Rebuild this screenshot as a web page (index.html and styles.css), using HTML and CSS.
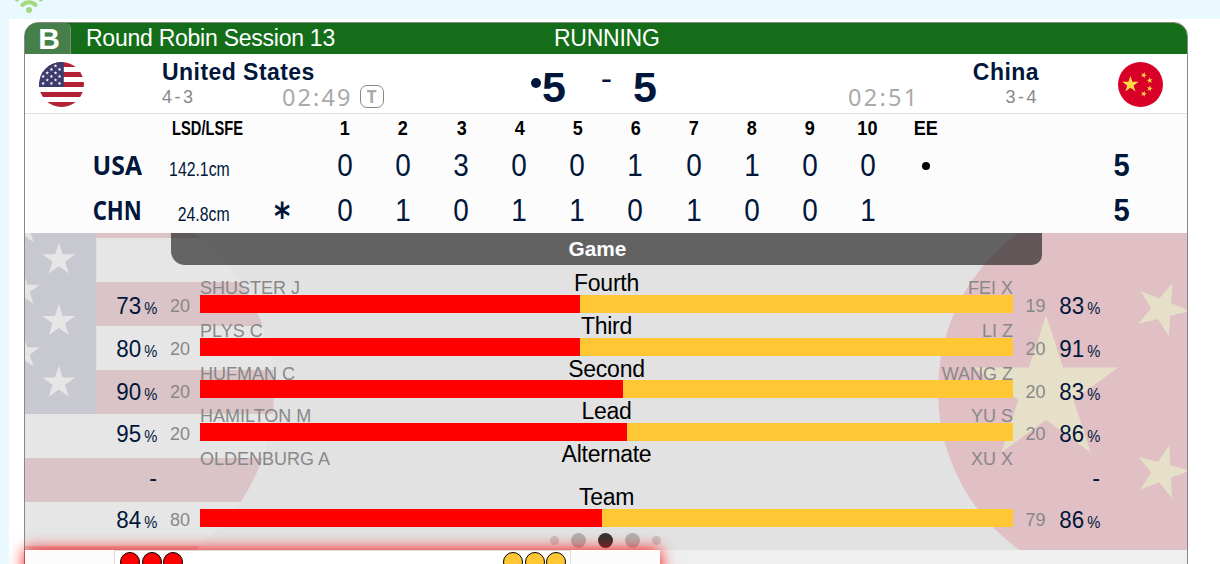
FILE: index.html
```
<!DOCTYPE html>
<html lang="en">
<head>
    <meta charset="utf-8">
    <title>Curling Live Scores</title>
    <link rel="stylesheet" href="styles.css">
</head>
<body>
    <svg class="defs" width="0" height="0">
        <defs>
            <polygon id="star" points="0,-1 .2245,-.309 .951,-.309 .3633,.118 .5878,.809 0,.382 -.5878,.809 -.3633,.118 -.951,-.309 -.2245,-.309"/>
            <clipPath id="round"><circle r="196"/></clipPath>
            <symbol id="flag-usa" viewBox="-196 -196 392 392">
                <g clip-path="url(#round)">
                    <rect x="-196" y="-196" width="392" height="392" fill="#fff"/>
                    <path d="M-196-174.2H196M-196-87.1H196M-196 0H196M-196 87.1H196M-196 174.2H196" stroke="#b22234" stroke-width="43.56"/>
                    <rect x="-196" y="-196" width="216" height="217.8" fill="#3c3b6e"/>
                    <g id="usa-stars" fill="#fff">
                        <use href="#star" transform="translate(-17 -131) scale(17)"/>
                        <use href="#star" transform="translate(-17 -70) scale(17)"/>
                        <use href="#star" transform="translate(-17 -9) scale(17)"/>
                        <use href="#star" transform="translate(-52 -162) scale(17)"/>
                        <use href="#star" transform="translate(-52 -101) scale(17)"/>
                        <use href="#star" transform="translate(-52 -39) scale(17)"/>
                        <use href="#star" transform="translate(-88 -131) scale(17)"/>
                        <use href="#star" transform="translate(-88 -70) scale(17)"/>
                        <use href="#star" transform="translate(-88 -9) scale(17)"/>
                        <use href="#star" transform="translate(-124 -101) scale(17)"/>
                        <use href="#star" transform="translate(-124 -39) scale(17)"/>
                        <use href="#star" transform="translate(-160 -70) scale(17)"/>
                        <use href="#star" transform="translate(-160 -9) scale(17)"/>
                    </g>
                </g>
            </symbol>
            <symbol id="flag-chn" viewBox="-196 -196 392 392">
                <circle r="196" fill="#d80027"/>
                <g fill="#ffda44">
                    <use href="#star" transform="translate(-88 0) scale(76)"/>
                    <use href="#star" transform="translate(28 -82) rotate(22) scale(28)"/>
                    <use href="#star" transform="translate(80 -35) rotate(-10) scale(28)"/>
                    <use href="#star" transform="translate(80 35) rotate(10) scale(28)"/>
                    <use href="#star" transform="translate(28 81) rotate(15) scale(28)"/>
                </g>
            </symbol>
        </defs>
    </svg>

    <div class="topbar">
        <svg class="wifi" viewBox="0 0 30 24" width="30" height="24">
            <path d="M3 10.500a17 17 0 0 1 24 0M8.500 16a9 9 0 0 1 13 0" fill="none" stroke="#a3d97f" stroke-width="4" stroke-linecap="round"/>
            <circle cx="15" cy="21" r="3" fill="#a3d97f"/>
        </svg>
    </div>

    <div class="page">
        <div class="card">
            <div class="header">
                <div class="sheet">B</div>
                <div class="session">Round Robin Session 13</div>
                <div class="status">RUNNING</div>
            </div>

            <div class="teams">
                <svg class="flag"><use href="#flag-usa"/></svg>
                <div class="team home">
                    <div class="team-name">United States</div>
                    <div class="team-info">
                        <span class="record">4-3</span>
                        <span class="clock">02:49</span>
                        <span class="timeout">T</span>
                    </div>
                </div>
                <div class="score">
                    <i class="hammer-dot"></i>
                    <b>5</b>
                    <span class="dash">-</span>
                    <b>5</b>
                </div>
                <div class="team away">
                    <div class="team-name">China</div>
                    <div class="team-info">
                        <span class="clock">02:51</span>
                        <span class="record">3-4</span>
                    </div>
                </div>
                <svg class="flag away-flag"><use href="#flag-chn"/></svg>
            </div>

            <div class="linescore">
                <div class="line ends">
                    <span></span><span><em class="lsd">LSD/LSFE</em></span><span></span>
                    <span><em>1</em></span><span><em>2</em></span><span><em>3</em></span><span><em>4</em></span><span><em>5</em></span><span><em>6</em></span><span><em>7</em></span><span><em>8</em></span><span><em>9</em></span><span><em>10</em></span><span><em>EE</em></span><span></span>
                </div>
                <div class="line">
                    <span class="code"><em class="usa">USA</em></span><span class="dist"><em>142.1cm</em></span><span></span>
                    <b>0</b><b>0</b><b>3</b><b>0</b><b>0</b><b>1</b><b>0</b><b>1</b><b>0</b><b>0</b><span><i class="pending"></i></span><span class="total"><em>5</em></span>
                </div>
                <div class="line">
                    <span class="code"><em class="chn">CHN</em></span><span class="dist"><em>24.8cm</em></span><span class="lsfe">*</span>
                    <b>0</b><b>1</b><b>0</b><b>1</b><b>1</b><b>0</b><b>1</b><b>0</b><b>0</b><b>1</b><span></span><span class="total"><em>5</em></span>
                </div>
            </div>

            <div class="stats">
                <svg class="backdrop left"><use href="#flag-usa"/></svg>
                <svg class="backdrop right"><use href="#flag-chn"/></svg>
                <div class="stats-title">Game</div>

                <div class="stat">
                    <div class="pct"><em>73</em><small>%</small></div>
                    <div class="throws">20</div>
                    <div class="compare">
                        <div class="names"><span>SHUSTER J</span><strong>Fourth</strong><span>FEI X</span></div>
                        <div class="bar"><div style="width: 46.8%"></div></div>
                    </div>
                    <div class="throws">19</div>
                    <div class="pct"><em>83</em><small>%</small></div>
                </div>
                <div class="stat">
                    <div class="pct"><em>80</em><small>%</small></div>
                    <div class="throws">20</div>
                    <div class="compare">
                        <div class="names"><span>PLYS C</span><strong>Third</strong><span>LI Z</span></div>
                        <div class="bar"><div style="width: 46.8%"></div></div>
                    </div>
                    <div class="throws">20</div>
                    <div class="pct"><em>91</em><small>%</small></div>
                </div>
                <div class="stat">
                    <div class="pct"><em>90</em><small>%</small></div>
                    <div class="throws">20</div>
                    <div class="compare">
                        <div class="names"><span>HUFMAN C</span><strong>Second</strong><span>WANG Z</span></div>
                        <div class="bar"><div style="width: 52%"></div></div>
                    </div>
                    <div class="throws">20</div>
                    <div class="pct"><em>83</em><small>%</small></div>
                </div>
                <div class="stat">
                    <div class="pct"><em>95</em><small>%</small></div>
                    <div class="throws">20</div>
                    <div class="compare">
                        <div class="names"><span>HAMILTON M</span><strong>Lead</strong><span>YU S</span></div>
                        <div class="bar"><div style="width: 52.5%"></div></div>
                    </div>
                    <div class="throws">20</div>
                    <div class="pct"><em>86</em><small>%</small></div>
                </div>
                <div class="stat">
                    <div class="pct none">-</div>
                    <div class="throws"></div>
                    <div class="compare">
                        <div class="names"><span>OLDENBURG A</span><strong>Alternate</strong><span>XU X</span></div>
                    </div>
                    <div class="throws"></div>
                    <div class="pct none">-</div>
                </div>
                <div class="stat">
                    <div class="pct"><em>84</em><small>%</small></div>
                    <div class="throws">80</div>
                    <div class="compare">
                        <div class="names"><span></span><strong>Team</strong><span></span></div>
                        <div class="bar"><div style="width: 49.4%"></div></div>
                    </div>
                    <div class="throws">79</div>
                    <div class="pct"><em>86</em><small>%</small></div>
                </div>

                <div class="pager">
                    <i class="tiny"></i><i></i><i class="active"></i><i></i><i class="tiny"></i>
                </div>
            </div>

            <div class="shots">
                <div class="stones">
                    <div class="red"><i></i><i></i><i></i></div>
                    <div class="yellow"><i></i><i></i><i></i></div>
                </div>
            </div>
        </div>
    </div>
</body>
</html>
```
FILE: styles.css
```
* {
    box-sizing: border-box;
}

body {
    margin: 0;
    height: 564px;
    overflow: hidden;
    background: #eaf8ff;
    color: #00163a;
    font-family: "Liberation Sans", Arial, sans-serif;
}

em, i {
    font-style: normal;
}

.defs {
    position: absolute;
}

.topbar {
    height: 19px;
    display: flex;
    align-items: flex-end;
    padding: 0 0 6px 14px;
}

.wifi {
    display: block;
    flex: none;
}

.page {
    margin-left: 9px;
    padding: 3px 0 0 15px;
    height: 545px;
    background: #fff;
    overflow: hidden;
}

.card {
    width: 1164px;
    height: 700px;
    background: #efefef;
    border: 1px solid #888;
    border-radius: 14px;
}

/* header */
.header {
    height: 31px;
    display: grid;
    grid-template-columns: 46px 483px 1fr;
    background: #146e19;
    border-radius: 13px 13px 0 0;
    color: #fff;
    font-size: 23px;
    letter-spacing: -0.25px;
    line-height: 30px;
}

.sheet {
    height: 31px;
    padding-left: 3px;
    background: #467f49;
    border-right: 1px solid #888;
    border-radius: 13px 6px 0 0;
    font-size: 30px;
    font-weight: bold;
    line-height: 32px;
    text-align: center;
}

.session {
    padding-left: 15px;
}

/* teams */
.teams {
    height: 60px;
    display: grid;
    grid-template-columns: 73px 402px 211px 349px 1fr;
    background: #fff;
    border-bottom: 1px solid #e2e2e2;
}

.flag {
    width: 45px;
    height: 45px;
    margin: 8px 0 0 14px;
}

.away-flag {
    margin-left: 58px;
}

.team.home {
    padding-left: 64px;
}

.team.away {
    padding-right: 21px;
}

.team-name {
    height: 30px;
    font-size: 23px;
    font-weight: bold;
    letter-spacing: 0.45px;
    line-height: 36px;
}

.away .team-name {
    text-align: right;
}

.team-info {
    height: 29px;
    display: flex;
    align-items: center;
    color: #888;
}

.record {
    width: 120px;
    margin-top: -3px;
    font-size: 18px;
    letter-spacing: 2.5px;
}

.away .record {
    width: auto;
    margin-left: auto;
}

.clock {
    color: #aaa;
    font-family: "Noto Sans", sans-serif;
    font-size: 23.5px;
    letter-spacing: 2.1px;
    line-height: 26px;
    margin-top: -4px;
}

.away .clock {
    margin-left: 137px;
    letter-spacing: 2.3px;
}

.timeout {
    width: 24px;
    height: 23px;
    margin: -5px 0 0 7px;
    border: 1px solid #888;
    border-radius: 7px;
    color: #aaa;
    font: bold 17px/22px "Noto Sans", sans-serif;
    text-align: center;
}

.score {
    display: flex;
    padding: 8px 0 0 31px;
    font-size: 43px;
    line-height: 51px;
}

.hammer-dot {
    width: 10px;
    height: 10px;
    margin-top: 16px;
    border-radius: 50%;
    background: #00163a;
}

.score b {
    margin-left: 1px;
}

.dash {
    width: 66px;
    padding-left: 15px;
    font-size: 34px;
    line-height: 33px;
    text-align: center;
}

/* end by end */
.linescore {
    height: 119px;
    background: #fcfcfc;
}

.line {
    height: 45px;
    display: grid;
    grid-template-columns: 141.5px 83px 66.5px repeat(11, 58.1px) 1fr;
    font-size: 31px;
    line-height: 46px;
    text-align: center;
}

.line b {
    font-weight: normal;
    transform: scaleX(0.9);
}

.line em {
    display: inline-block;
    white-space: nowrap;
}

.ends {
    height: 29px;
    color: #000;
    font-size: 20.5px;
    font-weight: bold;
    line-height: 28px;
}

.ends em {
    transform: scaleX(0.88);
}

.ends .lsd {
    margin: 0 -10px;
    transform: scaleX(0.715);
}

.code {
    padding-right: 24.5px;
    text-align: right;
    font: bold 26px/44px "Noto Sans", sans-serif;
}

.code em {
    transform-origin: right;
}

.usa {
    transform: scaleX(0.95);
}

.chn {
    transform: scaleX(0.85);
}

.dist {
    display: flex;
    justify-content: flex-end;
    padding-right: 20px;
    font-size: 20px;
    line-height: 53px;
}

.dist em {
    transform: scaleX(0.79);
    transform-origin: right;
}

.lsfe {
    font: bold 37px/57px "DejaVu Sans", sans-serif;
    transform: translateX(-1px) scaleX(0.84);
}

.pending {
    display: inline-block;
    width: 8px;
    height: 8px;
    border-radius: 50%;
    background: #000;
    vertical-align: 6px;
}

.total {
    padding-left: 101px;
    font-weight: bold;
}

.total em {
    transform: scaleX(0.94);
}

/* game statistics */
.stats {
    position: relative;
    height: 317px;
    background: #e2e2e2;
    overflow: hidden;
}

.backdrop {
    position: absolute;
    top: -38px;
    width: 392px;
    height: 392px;
    opacity: 0.15;
}

.backdrop.left {
    top: -39px;
    left: -147px;
    width: 396px;
    height: 396px;
}

.backdrop.right {
    left: 913px;
}

.stats-title {
    position: relative;
    width: 871px;
    height: 32px;
    margin: 0 0 5px 146px;
    padding-right: 18px;
    background: rgba(32, 32, 32, 0.66);
    border-radius: 0 0 10px 14px;
    color: #fff;
    font-size: 20.8px;
    font-weight: bold;
    line-height: 32px;
    text-align: center;
}

.stat {
    position: relative;
    height: 42.75px;
    display: grid;
    grid-template-columns: 132px 43px 813px 42px 45px;
}

.pct {
    font-size: 23.5px;
    line-height: 72px;
    text-align: right;
    white-space: nowrap;
}

.pct em {
    display: inline-block;
    transform: scaleX(0.95);
    transform-origin: right;
}

.pct small {
    display: inline-block;
    margin-left: 2px;
    font-size: 16px;
    transform: scaleX(0.92);
    transform-origin: right;
}

.pct.none {
    line-height: 74px;
}

.throws {
    color: #888;
    font-size: 18px;
    line-height: 73px;
    text-align: center;
    padding-left: 3px;
}

.names {
    height: 24.75px;
    display: grid;
    grid-template-columns: 1fr auto 1fr;
    color: #888;
    font-size: 18px;
    line-height: 36px;
}

.names strong {
    color: #000;
    font-size: 23px;
    font-weight: normal;
    letter-spacing: -0.25px;
    line-height: 26px;
}

.names span:last-child {
    text-align: right;
}

.bar {
    position: relative;
    height: 18px;
    background: #ffc734;
}

.bar div {
    height: 18px;
    background: #f00;
}

.pager {
    position: relative;
    display: flex;
    justify-content: center;
    align-items: center;
    gap: 12px;
    width: 871px;
    height: 15px;
    margin: 6px 0 0 145px;
}

.pager i {
    width: 15px;
    height: 15px;
    border-radius: 50%;
    background: #b0b0b0;
}

.pager .active {
    background: #333;
}

.pager .tiny {
    width: 9px;
    height: 9px;
    background: #c8c0c0;
}

/* shot by shot */
.shots {
    position: relative;
    width: 635px;
    height: 100px;
    padding-left: 89px;
    background: #fcfcfc;
    box-shadow: 0 0 15px #f00;
}

.stones {
    width: 457px;
    height: 100px;
    display: flex;
    justify-content: space-between;
    padding: 1px 4px 0 5px;
    background: #fff;
    border: 1px solid #ddd;
    border-width: 1px 1px 0;
}

.stones > div {
    display: flex;
    gap: 1.5px;
}

.stones i {
    width: 20px;
    height: 20px;
    border: 1.5px solid #000;
    border-radius: 50%;
}

.red i {
    background: #f00;
}

.yellow i {
    background: #ffc734;
}
```
